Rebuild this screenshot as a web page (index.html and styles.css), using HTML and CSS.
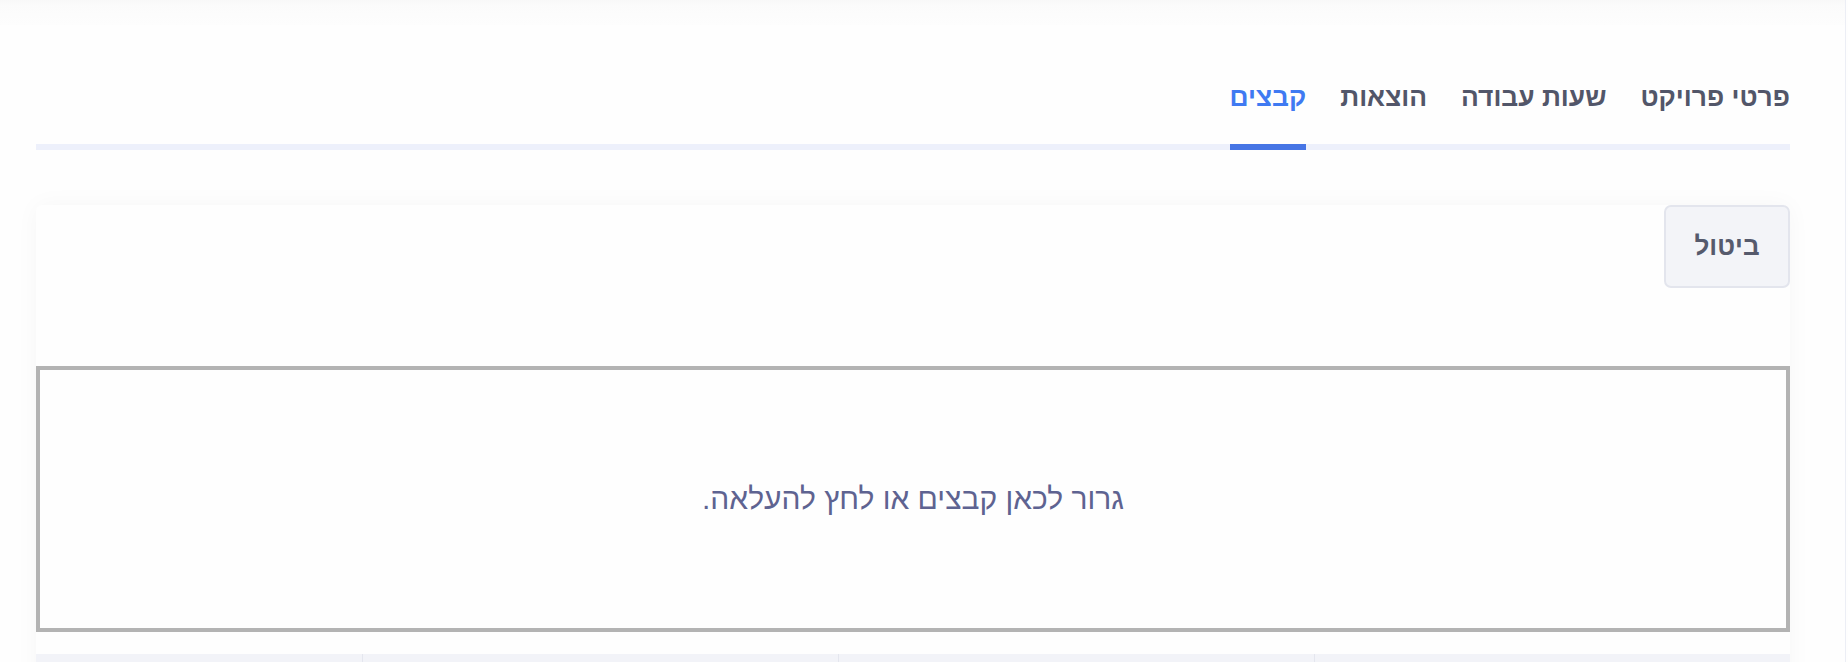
FILE: index.html
```html
<!DOCTYPE html>
<html lang="he" dir="rtl">
<head>
<meta charset="utf-8">
<title>קבצים</title>
<link rel="stylesheet" href="styles.css">
</head>
<body>
<div class="topbar"></div>
<main class="page">
  <nav class="tabs">
    <ul class="tab-list">
      <li class="tab">פרטי פרויקט</li>
      <li class="tab">שעות עבודה</li>
      <li class="tab">הוצאות</li>
      <li class="tab tab-active">קבצים</li>
    </ul>
  </nav>
  <section class="card">
    <div class="card-head">
      <button class="btn">ביטול</button>
    </div>
    <div class="dropzone">
      <p class="dz-text">גרור לכאן קבצים או לחץ להעלאה.</p>
    </div>
    <div class="table-head">
      <div class="th th-wide"></div>
      <div class="th th-wide"></div>
      <div class="th th-wide"></div>
      <div class="th th-narrow"></div>
    </div>
  </section>
</main>
<div class="scroll-track"></div>
</body>
</html>
```

FILE: styles.css
```css
* { box-sizing: border-box; }

html, body {
  margin: 0;
  padding: 0;
  background: #fefefe;
  font-family: "Liberation Sans", "DejaVu Sans", sans-serif;
  overflow: hidden;
}

.topbar {
  height: 25px;
  background: linear-gradient(to bottom, #f8f8f8 0px, #fbfbfb 5px, #fdfdfd 25px);
}

.page {
  padding: 57px 58px 0 36px;
}

.tab-list {
  list-style: none;
  margin: 0;
  padding: 0;
  display: flex;
  gap: 34px;
  border-bottom: 6px solid #edf0fb;
}

.tab {
  font-size: 26.4px;
  font-weight: 600;
  line-height: 30px;
  color: #525669;
  padding-bottom: 32px;
  margin-bottom: -6px;
  border-bottom: 6px solid transparent;
}

.tab-active {
  color: #3f7af2;
  border-bottom-color: #4675e5;
}

.card {
  margin-top: 55px;
  background: #fefefe;
  border-radius: 6px;
  box-shadow: 0 0 24px rgba(0, 0, 0, 0.035);
  height: 500px;
}

.card-head {
  display: flex;
  justify-content: flex-start;
  height: 161px;
}

.btn {
  width: 126px;
  height: 83px;
  background: #f3f4f8;
  border: 2px solid #e3e5ed;
  border-radius: 7px;
  font-family: inherit;
  font-size: 26px;
  font-weight: 600;
  color: #565a6c;
  padding: 0;
}

.dropzone {
  height: 266px;
  border: 4px solid #b3b3b3;
  display: flex;
  align-items: center;
  justify-content: center;
}

.dz-text {
  margin: 0;
  font-size: 30px;
  color: #5e6391;
}

.table-head {
  margin-top: 22px;
  display: flex;
  height: 50px;
  background: #f2f3f8;
}

.th {
  border-left: 1px solid #e4e6ee;
}

.th-wide { width: 476px; }
.th-narrow { flex: 1; border-left: 0; }

.scroll-track {
  position: fixed;
  top: 0;
  right: 0;
  bottom: 0;
  width: 3px;
  border-left: 1px solid #eceef5;
  background: #fefefe;
}
```
